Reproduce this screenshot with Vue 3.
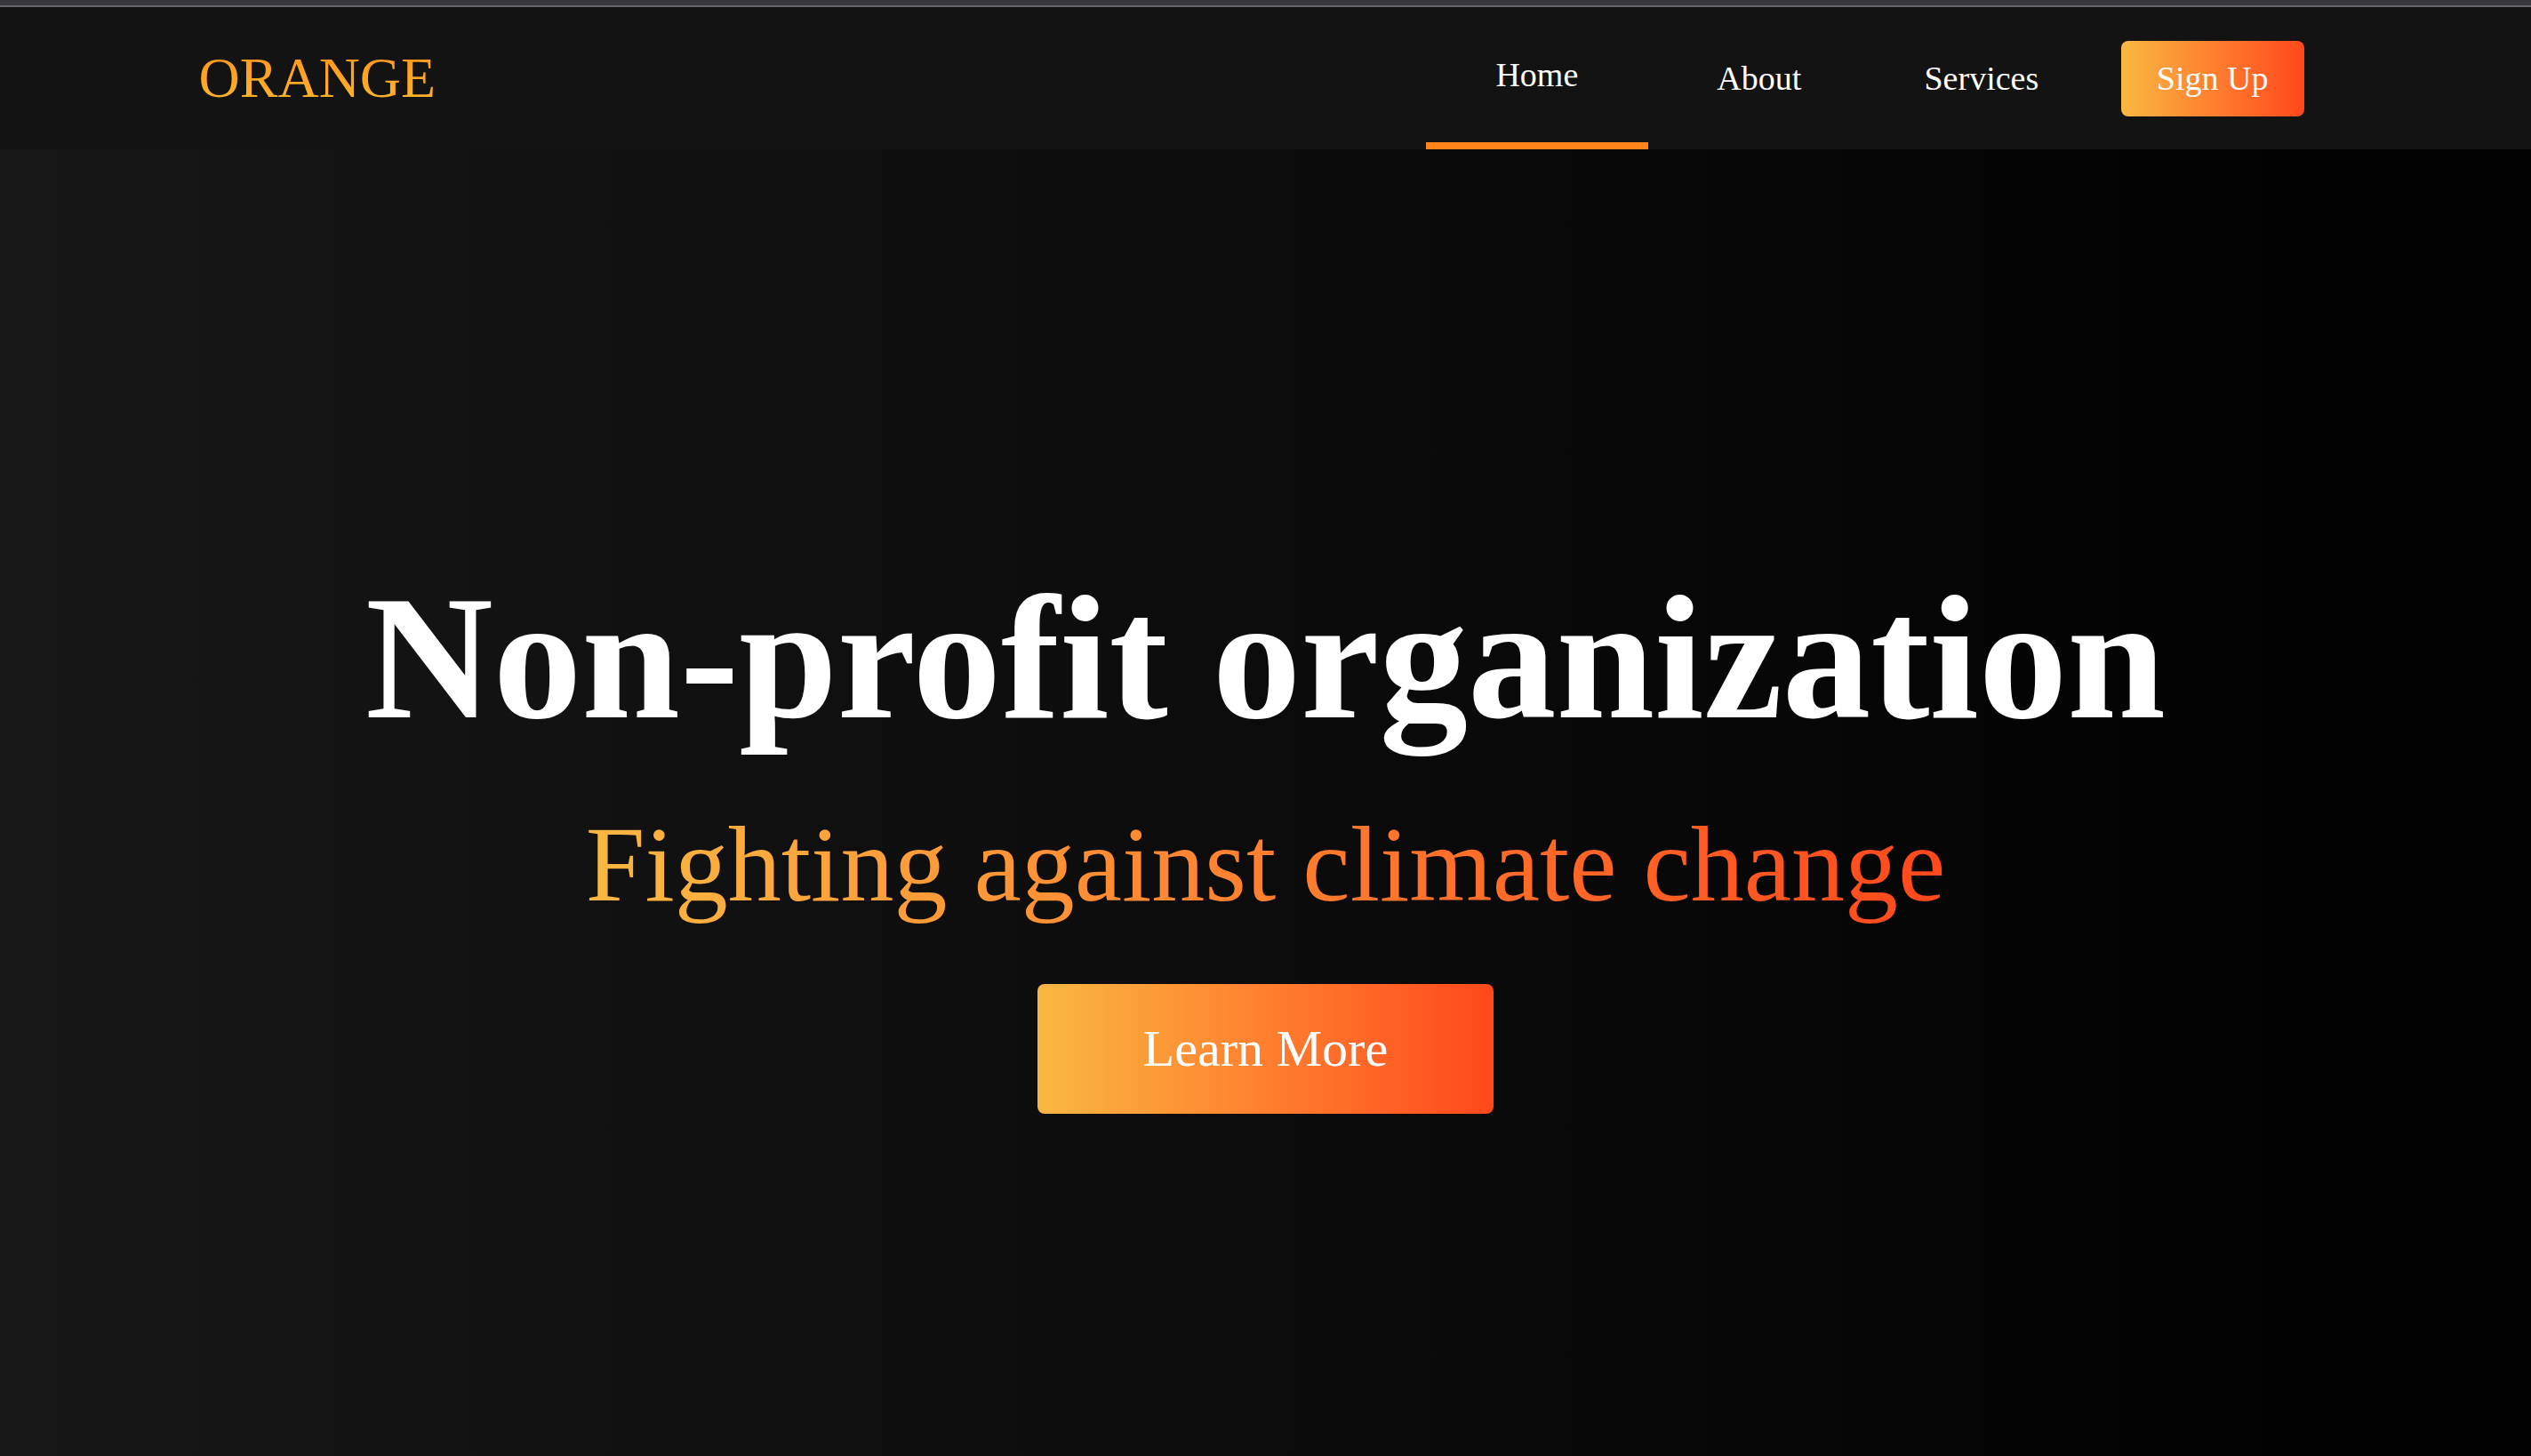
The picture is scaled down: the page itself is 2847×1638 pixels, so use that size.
<script setup>
const links = [
  { label: 'Home', href: '#home', active: true },
  { label: 'About', href: '#about', active: false },
  { label: 'Services', href: '#services', active: false },
]
</script>

<template>
  <div class="page">
    <header class="navbar">
      <div class="navbar-container">
        <a class="logo" href="#home">ORANGE</a>
        <nav class="menu">
          <a
            v-for="link in links"
            :key="link.label"
            :href="link.href"
            class="menu-link"
            :class="{ active: link.active }"
          >{{ link.label }}</a>
          <a class="button signup" href="#sign-up">Sign Up</a>
        </nav>
      </div>
    </header>
    <main id="home" class="hero">
      <h1 class="hero-title">Non-profit organization</h1>
      <p class="hero-text">Fighting against climate change</p>
      <button class="button learn-more" type="button">Learn More</button>
    </main>
  </div>
</template>

<style>
body {
  margin: 0;
  background: #000;
}
</style>

<style scoped>
.page {
  display: flex;
  flex-direction: column;
  box-sizing: border-box;
  min-height: 100vh;
  border-top: 6px solid #36373b;
  font-family: "Liberation Serif", "Times New Roman", serif;
  color: #fff;
}

.navbar {
  border-top: 2px solid #66646a;
  background: #131313;
}

.navbar-container {
  display: flex;
  justify-content: space-between;
  max-width: 2400px;
  height: 160px;
  margin: 0 auto;
}

.logo {
  align-self: center;
  background: linear-gradient(to top, #ffb92b, #ff921c);
  background-clip: text;
  -webkit-background-clip: text;
  color: transparent;
  font-size: 64px;
  text-decoration: none;
}

.menu {
  display: flex;
  align-items: stretch;
}

.menu-link {
  display: flex;
  align-items: center;
  justify-content: center;
  box-sizing: border-box;
  width: 250px;
  color: #fff;
  font-size: 38px;
  text-decoration: none;
}

.menu-link.active {
  border-bottom: 8px solid #ff8419;
}

.button {
  border: none;
  border-radius: 8px;
  background: linear-gradient(to right, #f9b842, #ff7f2f 50%, #ff481c);
  color: #fff;
  font-family: inherit;
  text-decoration: none;
  cursor: pointer;
}

.signup {
  align-self: center;
  margin: 0 32px;
  padding: 0 40px;
  font-size: 38px;
  line-height: 85px;
}

.hero {
  display: flex;
  flex: 1;
  flex-direction: column;
  align-items: center;
  justify-content: center;
  padding-top: 72px;
  background: linear-gradient(to right, #171717, #000);
}

.hero-title {
  margin: 0 0 49px;
  font-size: 199px;
  line-height: 230px;
}

.hero-text {
  margin: 0 0 65px;
  background: linear-gradient(to right, #f9b842, #ff7f2f 50%, #ff481c);
  background-clip: text;
  -webkit-background-clip: text;
  color: transparent;
  font-size: 120px;
  line-height: 138px;
}

.learn-more {
  padding: 0 119px;
  font-size: 58px;
  line-height: 146px;
}
</style>
